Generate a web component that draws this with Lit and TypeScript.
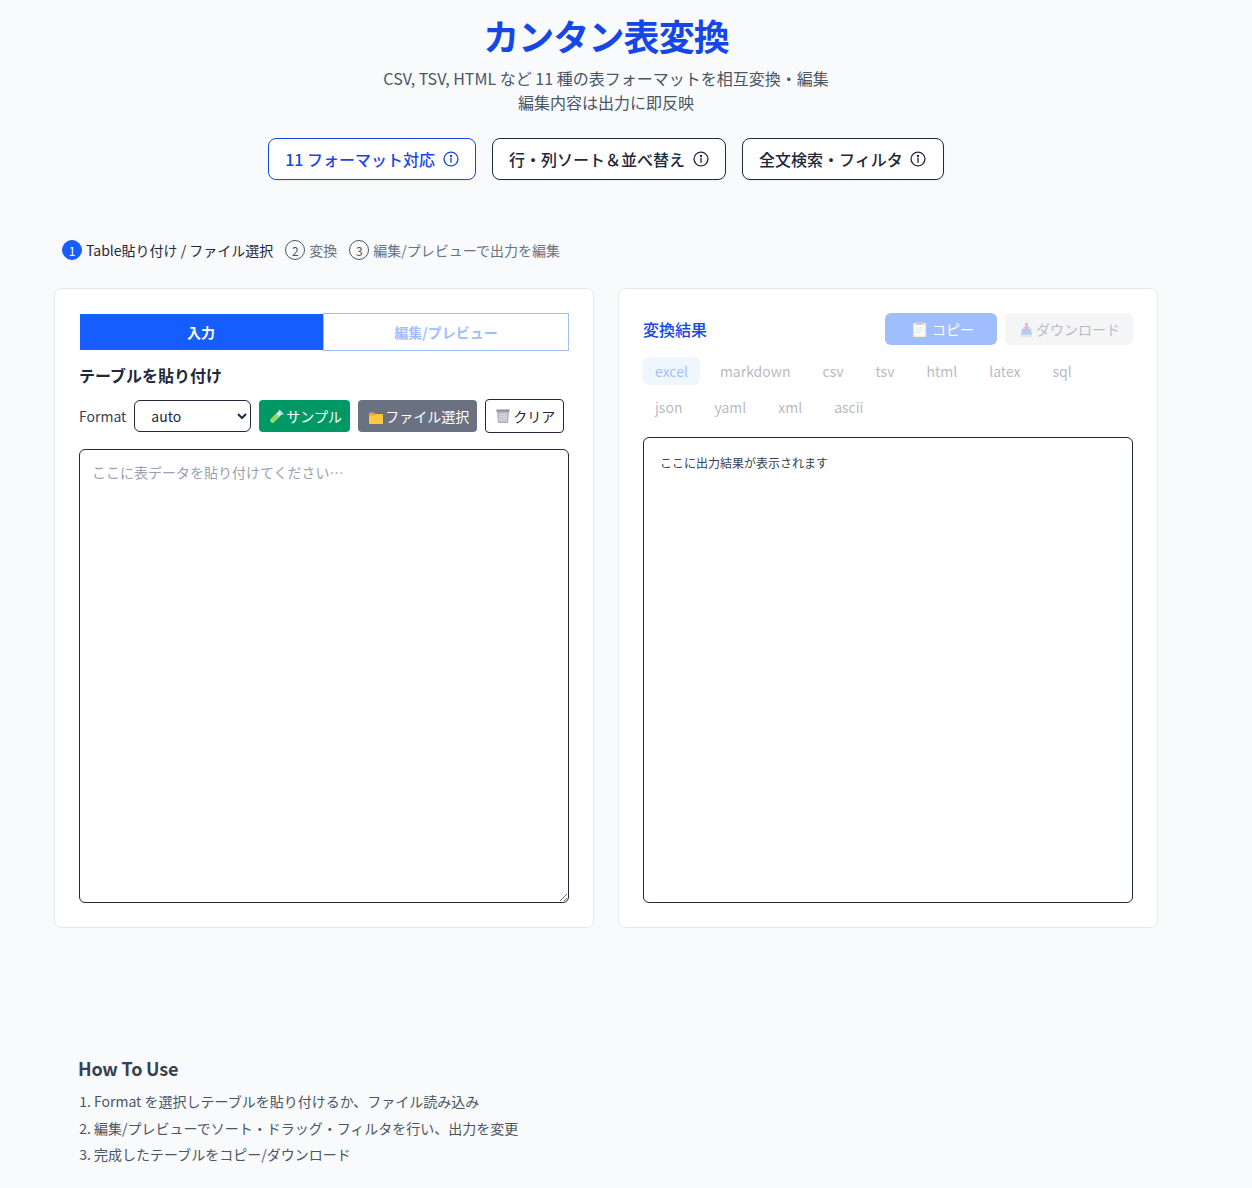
import { LitElement, html, css } from "lit";
import { customElement } from "lit/decorators.js";

const info = html`<svg class="info" viewBox="0 0 24 24" fill="none" stroke="currentColor" stroke-width="2" stroke-linecap="round"><circle cx="12" cy="12" r="10.4"></circle><line x1="12" y1="11" x2="12" y2="17"></line><circle cx="12" cy="7.4" r="0.8" fill="currentColor"></circle></svg>`;

const tube = html`<svg class="ico" viewBox="0 0 16 16" fill="none" stroke-linecap="round"><line x1="3.5" y1="12.5" x2="11" y2="5" stroke="#d6ecf5" stroke-width="4.4"></line><line x1="3.5" y1="12.5" x2="7.5" y2="8.5" stroke="#9ad85a" stroke-width="4.4"></line><line x1="10.5" y1="2.8" x2="13.6" y2="5.9" stroke="#b3dbee" stroke-width="1.8"></line></svg>`;
const folder = html`<svg class="ico" viewBox="0 0 16 16"><path d="M1 5.5a1 1 0 0 1 1-1h4l1.5 1.5H14a1 1 0 0 1 1 1V15a1 1 0 0 1-1 1H2a1 1 0 0 1-1-1z" fill="#e9a52a"></path><path d="M1 8.5a1 1 0 0 1 1-1h4.5L8 6.2h6a1 1 0 0 1 1 1V15a1 1 0 0 1-1 1H2a1 1 0 0 1-1-1z" fill="#ffc83d"></path></svg>`;
const trash = html`<svg class="ico" viewBox="0 0 16 16"><path d="M.8 3h12.4l-1.2 12H2z" fill="#b4b6bf"></path><path d="M3.6 5v8.5M5.4 5v8.5M7 5v8.5M8.6 5v8.5M10.4 5v8.5M2.6 6.5h8.8M2.8 8.5h8.4M3 10.5h8M3.2 12.5h7.6" stroke="#dcdde2" stroke-width=".7" fill="none"></path><rect x=".3" y="1.4" width="13.4" height="2.2" rx=".5" fill="#8e909c"></rect></svg>`;
const clip = html`<svg class="ico" viewBox="0 0 16 16"><rect x="2" y="2" width="13" height="14" rx="1" fill="#f6c193"></rect><rect x="3.6" y="4" width="9.8" height="10.6" fill="#fff"></rect><rect x="5" y="1" width="7" height="3" rx=".6" fill="#7d828e"></rect><path d="M5 7h7M5 9.2h7M5 11.4h5" stroke="#a8acb6" stroke-width=".9"></path></svg>`;
const tray = html`<svg class="ico" viewBox="0 0 16 16"><rect x="1" y="12" width="11" height="4" rx="1" fill="#c8b2de"></rect><path d="M2 7.5h9l1 6H1z" fill="#2f8fe0"></path><path d="M5 2h3v4h2l-3.5 4L3 6h2z" fill="#f0406f"></path></svg>`;

@customElement("app-root")
export class AppRoot extends LitElement {
  static styles = css`
    :host { display: block; width: 1252px; min-height: 1188px; font-family: "Noto Sans CJK JP", "Noto Sans", sans-serif; color: #1e2939; }
    * { box-sizing: border-box; }
    .page { background: #f9fafb; width: 1252px; min-height: 1188px; }
    .wrap { width: 1212px; padding-top: 15px; }
    header { display: flex; flex-direction: column; align-items: center; }
    h1 { margin: 0; font-size: 36px; line-height: 40px; font-weight: 700; letter-spacing: -0.9px; color: #1447e6; }
    .sub { margin: 11px 0 0; font-size: 16px; line-height: 24px; color: #4a5565; text-align: center; }
    .badges { display: flex; gap: 16px; margin-top: 24px; }
    .badge { display: flex; align-items: center; gap: 8px; height: 42px; padding: 0 16px; border: 1px solid #1e2939; border-radius: 8px; background: #fff; font-size: 16px; font-weight: 500; color: #1e2939; box-shadow: 0 1px 2px rgba(0,0,0,.05); }
    .badge.on { border-color: #1447e6; color: #1447e6; }
    .info { width: 16px; height: 16px; margin: 0 .5px 0 -.5px; }
    .steps { display: flex; align-items: center; margin: 58px 0 0 62px; height: 24px; font-size: 14px; color: #6a7282; gap: 12px; }
    .step { display: flex; align-items: center; gap: 4px; }
    .step.on { color: #1e2939; }
    .num { width: 20px; height: 20px; border-radius: 50%; border: 1px solid #4a5565; display: flex; align-items: center; justify-content: center; font-size: 12px; color: #4a5565; }
    .on .num { background: #155dfc; border-color: #155dfc; color: #fff; }
    .cards { display: grid; grid-template-columns: 540px 540px; gap: 24px; margin: 26px 0 0 54px; }
    .card { height: 640px; background: #fff; border: 1px solid #e5e7eb; border-radius: 8px; padding: 24px; display: flex; flex-direction: column; }
    .tabs { display: grid; grid-template-columns: 244px 246px; height: 38px; }
    .tab { display: flex; align-items: center; justify-content: center; font-size: 14px; font-weight: 700; }
    .tab.a { background: #155dfc; color: #fff; margin: 1px 0 1px 1px; padding-right: 1px; }
    .tab.b { background: #fff; color: #a1bffe; border: 1px solid #a1bffe; }
    h2 { margin: 12px 0 0; font-size: 16px; line-height: 24px; font-weight: 700; color: #1e2939; }
    .tools { display: flex; align-items: center; margin-top: 12px; height: 34px; font-size: 14px; color: #364153; }
    .tools label { margin-right: 8px; }
    select { width: 117px; height: 32px; border: 1px solid #1e2939; border-radius: 6px; background: #fff; padding: 0 12px; font: 14px "Noto Sans CJK JP", sans-serif; color: #1e2939; margin-right: 8px; }
    .btn { display: flex; align-items: center; gap: 1px; height: 32px; padding: 0 0 0 10px; border-radius: 4px; color: #fff; font-size: 14px; margin-right: 8px; white-space: nowrap; }
    .ico { width: 16px; height: 16px; flex: none; }
    .green { background: #009966; width: 91px; }
    .gray { background: #6a7282; width: 119px; }
    .white { background: #fff; color: #1e2939; border: 1px solid #1e2939; height: 34px; width: 79px; margin: 0; }
    textarea { display: block; width: 490px; height: 454px; margin: 16px 0 0; padding: 12px; border: 1px solid #1e2939; border-radius: 6px; background: #fff; resize: vertical; font: 14px/20px "Noto Sans CJK JP", sans-serif; }
    textarea::placeholder { color: #99a1af; opacity: 1; }
    .head { display: flex; align-items: center; height: 32px; }
    .title { font-size: 16px; font-weight: 500; color: #1447e6; flex: 1; }
    .copy { display: flex; align-items: center; gap: 5px; padding-left: 26px; width: 112px; height: 32px; background: #155dfc; color: #fff; border-radius: 6px; font-size: 14px; opacity: .4; }
    .dl { display: flex; align-items: center; padding-left: 15px; width: 128px; height: 32px; margin-left: 8px; background: #e5e7eb; color: #4a5565; border-radius: 6px; font-size: 14px; opacity: .4; }
    .fmts { display: flex; flex-wrap: wrap; gap: 8px; margin-top: 12px; opacity: .4; }
    .fmt { height: 28px; padding: 0 12px; border-radius: 6px; font-size: 14px; line-height: 28px; color: #4a5565; }
    .fmt.on { background: #dbeafe; color: #155dfc; }
    .out { height: 466px; margin-top: 16px; border: 1px solid #1e2939; border-radius: 6px; padding: 16px; font-size: 12px; line-height: 18px; color: #364153; }
    .howto { margin: 126px 0 0 78px; color: #364153; }
    h3 { margin: 0; font-size: 18px; line-height: 28px; font-weight: 600; letter-spacing: -0.2px; color: #364153; }
    ol { margin: 6px 0 0; padding: 0 0 0 16px; font-size: 14px; line-height: 26.5px; color: #4a5565; }
  `;

  render() {
    return html`<div class="page"><div class="wrap">
      <header>
        <h1>カンタン表変換</h1>
        <p class="sub">CSV, TSV, HTML など 11 種の表フォーマットを相互変換・編集<br>編集内容は出力に即反映</p>
        <div class="badges">
          <div class="badge on">11 フォーマット対応 ${info}</div>
          <div class="badge">行・列ソート＆並べ替え ${info}</div>
          <div class="badge">全文検索・フィルタ ${info}</div>
        </div>
      </header>
      <div class="steps">
        <div class="step on"><span class="num">1</span>Table貼り付け / ファイル選択</div>
        <div class="step"><span class="num">2</span>変換</div>
        <div class="step"><span class="num">3</span>編集/プレビューで出力を編集</div>
      </div>
      <div class="cards">
        <section class="card">
          <div class="tabs"><div class="tab a">入力</div><div class="tab b">編集/プレビュー</div></div>
          <h2>テーブルを貼り付け</h2>
          <div class="tools">
            <label>Format</label>
            <select><option>auto</option></select>
            <div class="btn green">${tube}サンプル</div>
            <div class="btn gray">${folder}ファイル選択</div>
            <div class="btn white">${trash}クリア</div>
          </div>
          <textarea placeholder="ここに表データを貼り付けてください…"></textarea>
        </section>
        <section class="card">
          <div class="head">
            <div class="title">変換結果</div>
            <div class="copy">${clip}コピー</div>
            <div class="dl">${tray}ダウンロード</div>
          </div>
          <div class="fmts">
            ${["excel","markdown","csv","tsv","html","latex","sql","json","yaml","xml","ascii"].map((f,i)=>html`<div class="fmt ${i===0?"on":""}">${f}</div>`)}
          </div>
          <div class="out">ここに出力結果が表示されます</div>
        </section>
      </div>
      <div class="howto">
        <h3>How To Use</h3>
        <ol>
          <li>Format を選択しテーブルを貼り付けるか、ファイル読み込み</li>
          <li>編集/プレビューでソート・ドラッグ・フィルタを行い、出力を変更</li>
          <li>完成したテーブルをコピー/ダウンロード</li>
        </ol>
      </div>
    </div></div>`;
  }
}
